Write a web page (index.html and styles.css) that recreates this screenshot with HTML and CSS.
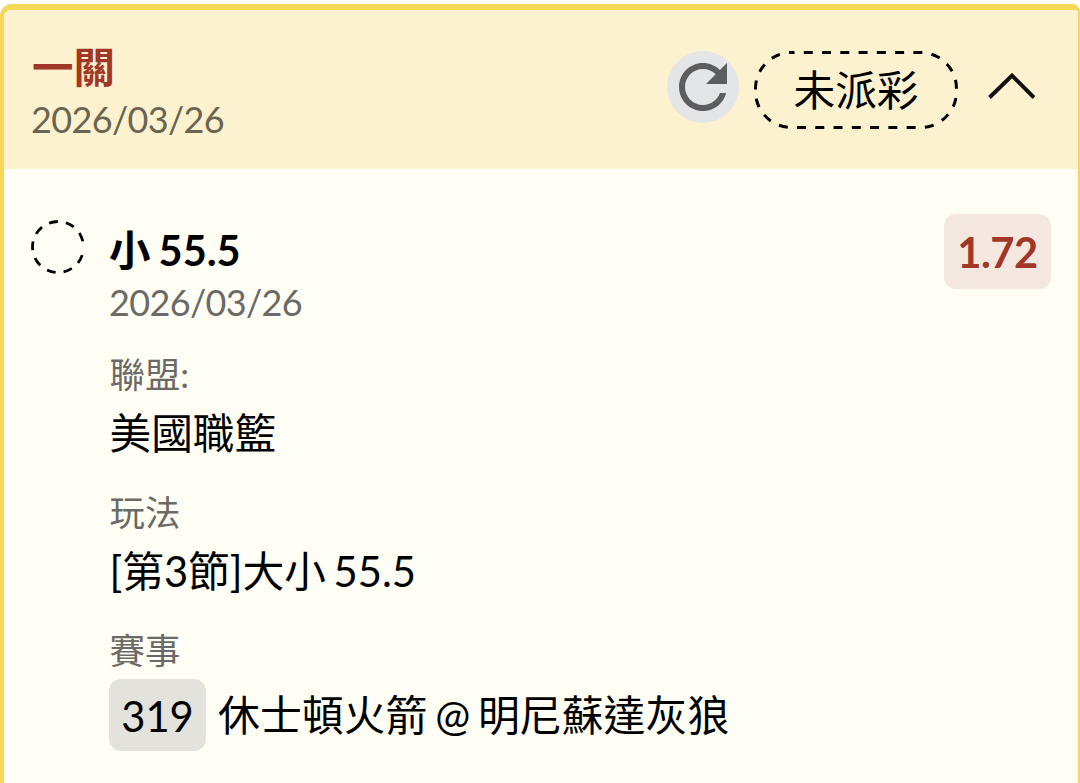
FILE: index.html
```
<!DOCTYPE html>
<html lang="zh-Hant">
<head>
    <meta charset="UTF-8">
    <meta name="viewport" content="width=device-width, initial-scale=1.0">
    <title>一關</title>
    <link rel="stylesheet" href="styles.css">
</head>
<body>
    <div class="ticket">
        <div class="ticket-header">
            <div class="ticket-title">
                <h1>一關</h1>
                <div class="date">2026/03/26</div>
            </div>
            <button class="refresh-btn" type="button" aria-label="refresh">
                <svg width="72" height="72" viewBox="0 0 24 24"><path fill="#5c5d5f" d="M17.65 6.35C16.2 4.9 14.21 4 12 4c-4.42 0-7.99 3.58-7.99 8s3.57 8 7.99 8c3.73 0 6.84-2.55 7.73-6h-2.08c-.82 2.33-3.04 4-5.65 4-3.31 0-6-2.69-6-6s2.69-6 6-6c1.66 0 3.14.69 4.22 1.78L13 11h7V4l-2.35 2.35z"/></svg>
            </button>
            <div class="status">
                <svg class="status-outline" width="204" height="78"><rect x="1.5" y="1.5" width="201" height="75" rx="36" fill="none" stroke="#000" stroke-width="3" stroke-dasharray="9 9.27" stroke-dashoffset="6"/></svg>
                <span>未派彩</span>
            </div>
            <svg class="chevron" width="48" height="30" viewBox="0 0 48 30"><path d="M2.500 25.500 25 3.500 47 25.500" fill="none" stroke="#111" stroke-width="4"/></svg>
        </div>

        <div class="bet">
            <svg class="bet-state" width="54" height="54"><circle cx="27" cy="27" r="25.500" fill="none" stroke="#000" stroke-width="2.800" pathLength="360" stroke-dasharray="20 18.500" stroke-dashoffset="-18.600"/></svg>
            <div class="bet-body">
                <h2>小 55.5</h2>
                <div class="date">2026/03/26</div>
                <dl>
                    <dt>聯盟:</dt>
                    <dd>美國職籃</dd>
                    <dt>玩法</dt>
                    <dd>[第3節]大小 55.5</dd>
                    <dt>賽事</dt>
                    <dd class="match"><span class="match-no">319</span><span class="match-name">休士頓火箭 @ 明尼蘇達灰狼</span></dd>
                </dl>
            </div>
            <div class="odds">1.72</div>
        </div>
    </div>
</body>
</html>
```
FILE: styles.css
```
* {
    box-sizing: border-box;
}

body {
    margin: 0;
    height: 783px;
    overflow: hidden;
    background-color: #fffffb;
    color: #000;
    font-family: Lato, "Noto Sans CJK TC", sans-serif;
    font-size: 41.7px;
    word-spacing: -3px;
}

h1, h2, dl, dt, dd {
    margin: 0;
}

h1, h2 {
    font-size: 41.5px;
    font-weight: bold;
    line-height: 54px;
}

h1 {
    padding-left: 1px;
    color: #a13726;
}

h2 {
    word-spacing: -2px;
}

svg {
    display: block;
    flex-shrink: 0;
}

.ticket {
    margin-top: 4px;
    height: 800px;
    border: 5px solid #f4d958;
    border-width: 6px 2px 6px 4px;
    border-radius: 12px 8px 0 0;
    background-color: #fffef4;
    overflow: hidden;
}

.ticket-header {
    display: flex;
    align-items: flex-start;
    height: 159px;
    padding: 30px 43px 0 27px;
    background-color: #fdf2cf;
}

.ticket-title {
    flex: 1;
}

.date {
    color: #696551;
    font-size: 36px;
    line-height: 50px;
    letter-spacing: -0.65px;
}

.refresh-btn {
    margin: 11px 15px 0 0;
    padding: 0;
    width: 72px;
    height: 72px;
    border: none;
    border-radius: 50%;
    background-color: #e4e5e7;
}

.status {
    position: relative;
    margin-top: 11px;
    width: 204px;
    height: 78px;
    line-height: 78px;
    text-align: center;
}

.status-outline {
    position: absolute;
    top: 0;
    left: 0;
}

.chevron {
    margin: 32px 0 0 29px;
}

.bet {
    display: flex;
    align-items: flex-start;
    padding: 45px 27px 0 27px;
}

.bet-state {
    margin-top: 6px;
}

.bet-body {
    flex: 1;
    padding: 9px 0 0 24px;
}

.bet-body .date {
    color: #6b6a66;
}

dt {
    margin-top: 23px;
    padding-left: 0.5px;
    color: #6b6a66;
    font-size: 35.4px;
    line-height: 50px;
}

dd {
    height: 65px;
    line-height: 66px;
    padding-left: 0.5px;
}

.match {
    display: flex;
    align-items: center;
    gap: 12px;
    height: 72px;
    margin-top: 3px;
    padding-left: 0;
}

.match-no {
    width: 97px;
    height: 72px;
    line-height: 74px;
    border-radius: 12px;
    background-color: #e3e2dc;
    text-align: center;
}

.match-name {
    font-size: 41.9px;
}

.odds {
    width: 107px;
    height: 75px;
    line-height: 76px;
    border-radius: 12px;
    background-color: #f4e7e0;
    color: #a13726;
    font-weight: bold;
    letter-spacing: -0.5px;
    text-align: center;
}
```
